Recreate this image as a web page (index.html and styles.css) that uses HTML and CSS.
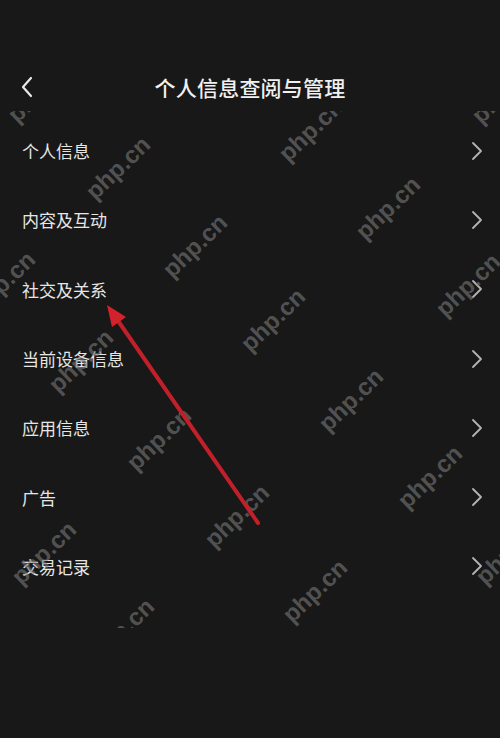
FILE: index.html
```html
<!DOCTYPE html>
<html lang="zh-CN">
<head>
<meta charset="utf-8">
<title>个人信息查阅与管理</title>
<link rel="stylesheet" href="styles.css">
</head>
<body>
<div class="screen">
  <header class="topbar">
    <span class="back">
      <svg width="14" height="22" viewBox="0 0 14 22"><path d="M11 2 L3 11 L11 20" fill="none" stroke="#e8e8e8" stroke-width="2.2" stroke-linecap="round" stroke-linejoin="round"/></svg>
    </span>
    <h1 class="title">个人信息查阅与管理</h1>
  </header>
  <ul class="menu">
    <li class="item"><span class="label">个人信息</span><svg class="chev" width="12" height="20" viewBox="0 0 12 20"><path d="M2 2 L10 10 L2 18" fill="none" stroke="#b4b4b4" stroke-width="1.8" stroke-linecap="round" stroke-linejoin="round"/></svg></li>
    <li class="item"><span class="label">内容及互动</span><svg class="chev" width="12" height="20" viewBox="0 0 12 20"><path d="M2 2 L10 10 L2 18" fill="none" stroke="#b4b4b4" stroke-width="1.8" stroke-linecap="round" stroke-linejoin="round"/></svg></li>
    <li class="item"><span class="label">社交及关系</span><svg class="chev" width="12" height="20" viewBox="0 0 12 20"><path d="M2 2 L10 10 L2 18" fill="none" stroke="#b4b4b4" stroke-width="1.8" stroke-linecap="round" stroke-linejoin="round"/></svg></li>
    <li class="item"><span class="label">当前设备信息</span><svg class="chev" width="12" height="20" viewBox="0 0 12 20"><path d="M2 2 L10 10 L2 18" fill="none" stroke="#b4b4b4" stroke-width="1.8" stroke-linecap="round" stroke-linejoin="round"/></svg></li>
    <li class="item"><span class="label">应用信息</span><svg class="chev" width="12" height="20" viewBox="0 0 12 20"><path d="M2 2 L10 10 L2 18" fill="none" stroke="#b4b4b4" stroke-width="1.8" stroke-linecap="round" stroke-linejoin="round"/></svg></li>
    <li class="item"><span class="label">广告</span><svg class="chev" width="12" height="20" viewBox="0 0 12 20"><path d="M2 2 L10 10 L2 18" fill="none" stroke="#b4b4b4" stroke-width="1.8" stroke-linecap="round" stroke-linejoin="round"/></svg></li>
    <li class="item"><span class="label">交易记录</span><svg class="chev" width="12" height="20" viewBox="0 0 12 20"><path d="M2 2 L10 10 L2 18" fill="none" stroke="#b4b4b4" stroke-width="1.8" stroke-linecap="round" stroke-linejoin="round"/></svg></li>
  </ul>

  <div class="watermarks">
    <span class="wm" style="left:40px;top:-20px">php.cn</span>
    <span class="wm" style="left:311px;top:19px">php.cn</span>
    <span class="wm" style="left:504px;top:-19px">php.cn</span>
    <span class="wm" style="left:118px;top:57px">php.cn</span>
    <span class="wm" style="left:388px;top:97px">php.cn</span>
    <span class="wm" style="left:3px;top:172px">php.cn</span>
    <span class="wm" style="left:195px;top:135px">php.cn</span>
    <span class="wm" style="left:468px;top:174px">php.cn</span>
    <span class="wm" style="left:81px;top:250px">php.cn</span>
    <span class="wm" style="left:273px;top:209px">php.cn</span>
    <span class="wm" style="left:159px;top:328px">php.cn</span>
    <span class="wm" style="left:351px;top:289px">php.cn</span>
    <span class="wm" style="left:44px;top:442px">php.cn</span>
    <span class="wm" style="left:237px;top:405px">php.cn</span>
    <span class="wm" style="left:430px;top:366px">php.cn</span>
    <span class="wm" style="left:122px;top:519px">php.cn</span>
    <span class="wm" style="left:315px;top:480px">php.cn</span>
    <span class="wm" style="left:508px;top:442px">php.cn</span>
  </div>

  <svg class="arrow" width="500" height="738" viewBox="0 0 500 738">
    <line x1="258" y1="523" x2="114" y2="315" stroke="#c1202a" stroke-width="4" stroke-linecap="round"/>
    <polygon points="107,305 126,317 112,327" fill="#d4222c"/>
  </svg>
</div>
</body>
</html>
```

FILE: styles.css
```css
html, body {
  margin: 0;
  padding: 0;
  background: #181818;
}

body {
  font-family: "Noto Sans CJK SC", "Noto Sans", sans-serif;
  color: #e8e8e8;
}

.screen {
  position: relative;
  width: 500px;
  height: 738px;
  overflow: hidden;
  background: #181818;
}

.topbar {
  position: relative;
  margin-top: 57px;
  height: 59px;
  display: flex;
  align-items: center;
  justify-content: center;
}

.back {
  position: absolute;
  left: 20px;
  top: 19px;
  display: flex;
}

.title {
  margin: 0;
  font-size: 21px;
  font-weight: 500;
  color: #f0f0f0;
  letter-spacing: 0.2px;
  line-height: 1;
  padding-top: 2px;
}

.menu {
  list-style: none;
  margin: 0;
  padding: 0;
}

.item {
  height: 69.3px;
  display: flex;
  align-items: center;
  justify-content: space-between;
  padding: 0 17px 0 22px;
}

.label {
  font-size: 17px;
  color: #e6e6e6;
  line-height: 1;
}

.chev {
  display: block;
}

.watermarks {
  position: absolute;
  left: 0;
  top: 111px;
  width: 500px;
  height: 517px;
  overflow: hidden;
  pointer-events: none;
}

.wm {
  position: absolute;
  transform: translate(-50%, -50%) rotate(-44deg);
  font-family: "Liberation Sans", Arial, sans-serif;
  font-weight: bold;
  font-size: 24px;
  color: rgba(120, 120, 120, 0.62);
  white-space: nowrap;
  line-height: 1;
}

.arrow {
  position: absolute;
  left: 0;
  top: 0;
  pointer-events: none;
}
```
